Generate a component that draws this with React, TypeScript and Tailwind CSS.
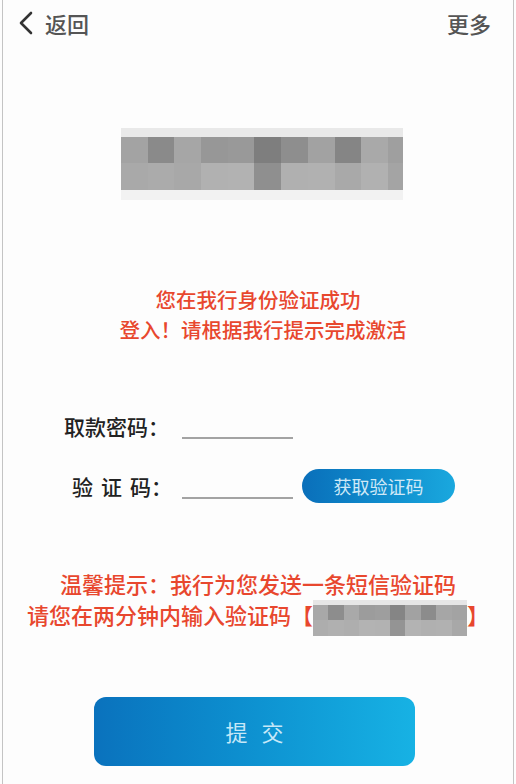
import React from 'react';

const topRow1 = [
  'bg-[#a3a3a3]', 'bg-[#8a8a8a]', 'bg-[#a6a6a6]', 'bg-[#979797]', 'bg-[#999999]', 'bg-[#7e7e7e]',
  'bg-[#8e8e8e]', 'bg-[#a2a2a2]', 'bg-[#858585]', 'bg-[#a9a9a9]', 'bg-[#9f9f9f]',
];
const topRow2 = [
  'bg-[#a9a9a9]', 'bg-[#ababab]', 'bg-[#a8a8a8]', 'bg-[#b1b1b1]', 'bg-[#b2b2b2]', 'bg-[#8f8f8f]',
  'bg-[#b0b0b0]', 'bg-[#b1b1b1]', 'bg-[#a9a9a9]', 'bg-[#b1b1b1]', 'bg-[#a4a4a4]',
];
const tipRow1 = [
  'bg-[#a8a8a8]', 'bg-[#8d8d8d]', 'bg-[#a9a9a9]', 'bg-[#9c9c9c]', 'bg-[#9e9e9e]', 'bg-[#858585]',
  'bg-[#a2a2a2]', 'bg-[#8c8c8c]', 'bg-[#a6a6a6]', 'bg-[#a3a3a3]',
];
const tipRow2 = [
  'bg-[#adadad]', 'bg-[#b0b0b0]', 'bg-[#aeaeae]', 'bg-[#b3b3b3]', 'bg-[#b2b2b2]', 'bg-[#949494]',
  'bg-[#b3b3b3]', 'bg-[#b0b0b0]', 'bg-[#b1b1b1]', 'bg-[#a8a8a8]',
];

function TopMosaic() {
  return (
    <div className="ml-[118px] flex w-[282px] flex-col">
      <div className="h-[9px] bg-[#e9e9e9]" />
      <div className="flex h-[26px]">
        {topRow1.map((c, i) => (
          <div key={i} className={`${c} ${i === 10 ? 'w-[15px]' : 'w-[26.7px]'}`} />
        ))}
      </div>
      <div className="flex h-[27px]">
        {topRow2.map((c, i) => (
          <div key={i} className={`${c} ${i === 10 ? 'w-[15px]' : 'w-[26.7px]'}`} />
        ))}
      </div>
      <div className="h-[10px] bg-[#f2f2f2]" />
    </div>
  );
}

function TipMosaic() {
  return (
    <span className="inline-flex w-[154px] flex-col align-middle">
      <span className="h-[5px] bg-[#e6e6e6]" />
      <span className="flex h-[15px]">
        {tipRow1.map((c, i) => (
          <span key={i} className={`${c} w-[15.4px]`} />
        ))}
      </span>
      <span className="flex h-[16px]">
        {tipRow2.map((c, i) => (
          <span key={i} className={`${c} w-[15.4px]`} />
        ))}
      </span>
    </span>
  );
}

export default function App() {
  return (
    <div
      className="h-[784px] w-[516px] overflow-hidden bg-[#fdfdfd]"
      style={{ fontFamily: '"Noto Sans CJK SC", "Noto Sans", sans-serif' }}
    >
      <div className="ml-[2px] flex h-full w-[512px] flex-col border-x border-[#c4c4c4]">
        {/* header */}
        <div className="flex h-[46px] items-center justify-between pl-[14px] pr-[22px]">
          <div className="flex items-center">
            <svg width="18" height="24" viewBox="0 0 18 24" className="mr-[10px]">
              <polyline
                points="14,2 4,12 14,22"
                fill="none"
                stroke="#333"
                strokeWidth="2.6"
                strokeLinecap="round"
                strokeLinejoin="round"
              />
            </svg>
            <span className="text-[22px] font-medium leading-none text-[#555]">返回</span>
          </div>
          <span className="text-[22px] font-medium leading-none text-[#555]">更多</span>
        </div>

        <div className="mt-[82px]">
          <TopMosaic />
        </div>

        <div className="mt-[84px] text-center text-[20.5px] font-medium leading-[30px] text-[#e8472e]">
          <div>您在我行身份验证成功</div>
          <div className="pl-[10px]">登入！请根据我行提示完成激活</div>
        </div>

        {/* form */}
        <div className="mt-[62px] flex flex-col gap-[20px]">
          <div className="flex h-[40px] items-center">
            <div className="ml-[61px] w-[118px] text-[21px] font-medium leading-none text-[#222]">取款密码：</div>
            <div className="flex h-[40px] w-[111px] items-end pb-[7px]">
              <div className="h-[2px] w-full bg-[#a3a3a3]" />
            </div>
          </div>
          <div className="flex h-[40px] items-center">
            <div className="ml-[61px] flex w-[118px] gap-[8px] pl-[8px] text-[21px] font-medium leading-none text-[#222]">
              <span>验</span>
              <span>证</span>
              <span>码：</span>
            </div>
            <div className="flex h-[40px] w-[111px] items-end pb-[7px]">
              <div className="h-[2px] w-full bg-[#a3a3a3]" />
            </div>
            <button className="ml-[9px] flex h-[34px] w-[153px] items-center justify-center rounded-full bg-gradient-to-r from-[#0a6fba] to-[#1aa8de] text-[18px] text-[#cfe9f7]">
              获取验证码
            </button>
          </div>
        </div>

        {/* tips */}
        <div className="mt-[62px] text-center text-[22px] font-medium leading-[31px] text-[#e8472e]">
          <div>温馨提示：我行为您发送一条短信验证码</div>
          <div className="whitespace-nowrap">
            请您在两分钟内输入验证码【<TipMosaic />】
          </div>
        </div>

        <button className="ml-[91px] mt-[61px] flex h-[69px] w-[321px] items-center justify-center rounded-[12px] bg-gradient-to-r from-[#0a72bd] to-[#17b2e4] text-[22px] tracking-[14px] text-[#c6e8f8]">
          <span className="pl-[14px]">提交</span>
        </button>
      </div>
    </div>
  );
}
